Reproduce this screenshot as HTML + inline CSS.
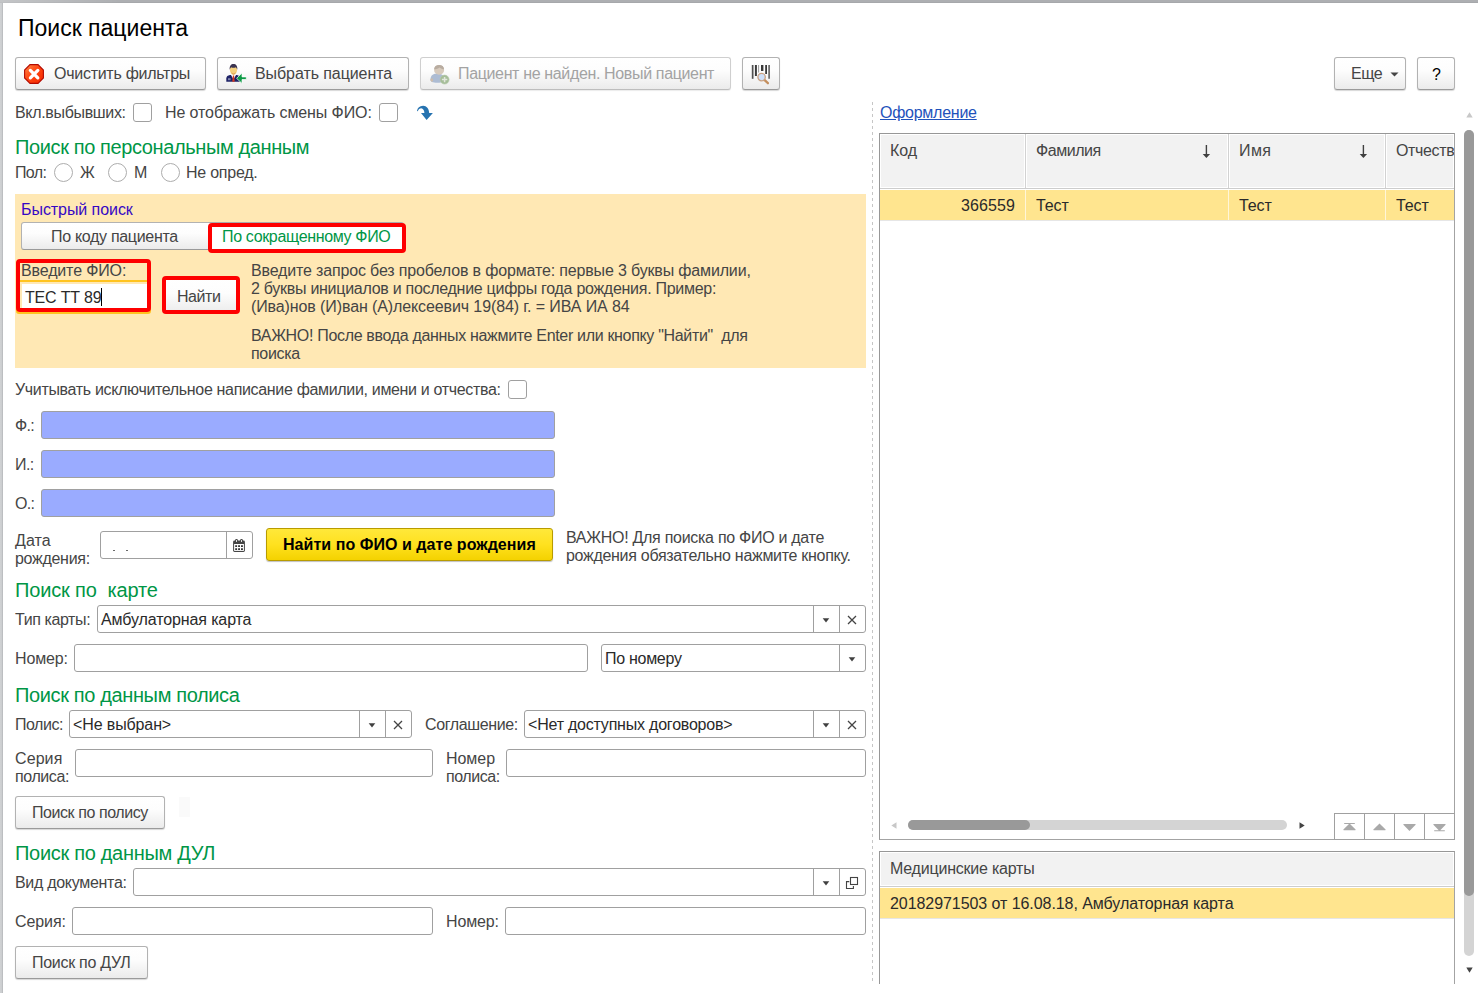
<!DOCTYPE html>
<html lang="ru">
<head>
<meta charset="utf-8">
<title>Поиск пациента</title>
<style>
html,body{margin:0;padding:0;overflow:hidden;}
body{width:1478px;height:993px;overflow:hidden;background:#fff;position:relative;
 font-family:"Liberation Sans",sans-serif;font-size:16px;color:#454545;}
*{box-sizing:border-box;}
.a{position:absolute;white-space:nowrap;}
.t{position:absolute;white-space:nowrap;line-height:18px;height:18px;}
.frameT{left:0;top:0;width:1478px;height:3px;background:linear-gradient(to right,rgba(255,255,255,.28),rgba(255,255,255,0) 120px),linear-gradient(#adafb2 0,#adafb2 66%,#a6a8ab 66%);}
.frameL{left:0;top:3px;width:3px;height:990px;background:linear-gradient(to right,#d0d2d4,#cbcdcf 60%,#b2b4b7);}
.title{left:18px;top:13px;font-size:23px;line-height:28px;color:#000;}
.btn{position:absolute;height:33px;border:1px solid #b2b2b2;border-bottom-color:#9a9a9a;border-radius:3px;
 background:linear-gradient(#ffffff 0%,#fdfdfd 40%,#ebebeb 100%);
 box-shadow:0 1px 1px rgba(0,0,0,.16);}
.btn.dis{border-color:#cfcfcf;border-bottom-color:#bdbdbd;box-shadow:0 1px 1px rgba(0,0,0,.08);}
.h{position:absolute;white-space:nowrap;font-size:20px;line-height:24px;color:#009646;}
.cb{position:absolute;width:19px;height:19px;border:1px solid #a0a0a0;border-radius:3px;background:#fff;}
.rb{position:absolute;width:19px;height:19px;border:1px solid #adadad;border-radius:50%;background:#fff;}
.inp{position:absolute;height:28px;border:1px solid #a0a0a0;border-radius:3px;background:#fff;
 line-height:26px;color:#222;white-space:nowrap;overflow:hidden;}
.inp.blue{background:#9aabff;}
.sep{position:absolute;top:0;width:1px;height:26px;background:#a0a0a0;}
.red{position:absolute;border:4px solid #fe0000;border-radius:4px;}
svg{display:block;overflow:visible;}
</style>
</head>
<body>
<div class="a frameT"></div>
<div class="a frameL"></div>

<!-- toolbar -->
<div class="btn" style="left:15px;top:57px;width:191px;"></div>
<div class="btn" style="left:217px;top:57px;width:192px;"></div>
<div class="btn dis" style="left:420px;top:57px;width:311px;"></div>
<div class="btn" style="left:742px;top:57px;width:38px;"></div>
<div class="btn" style="left:1334px;top:57px;width:72px;"></div>
<div class="btn" style="left:1417px;top:57px;width:38px;"></div>

<!-- icon: clear filters (red octagon with white X) -->
<svg class="a" style="left:24px;top:64px;" width="20" height="20" viewBox="0 0 20 20">
 <defs><linearGradient id="rg" x1="0" y1="0" x2="1" y2="1"><stop offset="0" stop-color="#ff8a4a"/><stop offset=".45" stop-color="#ff4612"/><stop offset="1" stop-color="#f52800"/></linearGradient></defs>
 <path d="M6 .6h8L19.400 6v8L14 19.400H6L.6 14V6z" fill="url(#rg)" stroke="#b30a00" stroke-width="1.100"/>
 <path d="M6.400 6.400l7.400 7.400M13.800 6.400l-7.400 7.400" stroke="#fff" stroke-width="3.300" stroke-linecap="round"/>
</svg>
<!-- icon: choose patient -->
<svg class="a" style="left:226px;top:63px;" width="21" height="21" viewBox="0 0 21 21">
 <path d="M.3 18.800v-3.200c0-2.300 1.500-3.400 3.700-3.700h6.800c2.100.3 3.200 1.400 3.200 3.700v3.200z" fill="#1e2266"/>
 <path d="M2 15.200h2.600v2H2z" fill="#7d84ad"/>
 <path d="M5 11.900h5l-2.500 4.600z" fill="#fff"/>
 <path d="M6.900 12.600h1.200l.6 6.200H6.300z" fill="#d9381e"/>
 <ellipse cx="7.500" cy="6.900" rx="3.600" ry="4.800" fill="#f6d27e"/>
 <path d="M5.300 8.500c1 2.600 3.400 2.600 4.400 0-.3 2.200-1.100 3.300-2.200 3.300s-1.900-1.100-2.200-3.300z" fill="#dfa254"/>
 <path d="M3.700 6.800C3.300 2.800 5 .9 7.500.9s4.200 1.900 3.800 5.900c-.4-1.400-.9-2.100-1.500-2.600-1 .8-3.600.8-4.600 0-.6.500-1.100 1.200-1.500 2.600z" fill="#3b3350"/>
 <path d="M10.600 15.300l5.400-5.200v3.800h4.300v2.600H16v3.900z" fill="#0d9a45" stroke="#fff" stroke-width=".7" stroke-linejoin="round"/>
</svg>
<!-- icon: new patient (disabled) -->
<svg class="a" style="left:430px;top:64px;" width="20" height="21" viewBox="0 0 20 21">
 <path d="M.4 15.500c.3-3.500 1.800-5.300 4.500-5.800h5c2.800.5 4.300 2.300 4.500 5.800.1 2-1.500 3.300-7 3.300-5 0-7.100-1.300-7-3.300z" fill="#adbcd3"/>
 <path d="M.5 15c.5-1 2-.9 2.400 0 .5 1.200.2 2.400-.8 2.800C.9 17.500.1 16.200.5 15z" fill="#cdbcab"/>
 <ellipse cx="9.100" cy="5.900" rx="5" ry="4.900" fill="#d7cabc"/>
 <path d="M4.100 5.300C4.100 2.400 6.300 1 9.100 1s5 1.400 5 4.300c-1.700-.2-3.200-.8-4.500-1.900-1.300 1.100-3.300 1.700-5.500 1.900z" fill="#b8aca0"/>
 <circle cx="14.600" cy="15.600" r="4.500" fill="#a5bd98" stroke="#b7caac" stroke-width=".6"/>
 <path d="M14.600 12.900v5.400M11.900 15.600h5.400" stroke="#e1e6dc" stroke-width="1.500"/>
</svg>
<!-- icon: barcode search -->
<svg class="a" style="left:751px;top:65px;" width="20" height="19" viewBox="0 0 20 19">
 <path d="M.8 0h1.700v13.800H.8z" fill="#505050"/>
 <path d="M3.900 0h2v11H3.900z" fill="#3a3a3a"/>
 <path d="M7.200 0h.9v7.500h-.9z" fill="#8f8f8f"/>
 <path d="M10 0h2.400v6H10z" fill="#3a3a3a"/>
 <path d="M14.200 0h1.800v9h-1.800z" fill="#3a3a3a"/>
 <path d="M17.300 0h1.600v13.800h-1.600z" fill="#606060"/>
 <path d="M13.400 14.900l3.500 3.300" stroke="#c48f5e" stroke-width="2.300" stroke-linecap="round"/>
 <circle cx="10.600" cy="12.100" r="3.700" fill="#cfe0f9" stroke="#c9a283" stroke-width="1.300"/>
</svg>
<!-- more arrow -->
<svg class="a" style="left:1390px;top:72px;" width="9" height="5" viewBox="0 0 9 5"><path d="M.5.500h8L4.500 4.500z" fill="#444"/></svg>

<!-- row 1 -->
<div class="cb" style="left:133px;top:103px;"></div>
<div class="cb" style="left:379px;top:103px;"></div>
<svg class="a" style="left:416px;top:105px;" width="18" height="16" viewBox="0 0 18 16">
 <path d="M1 6C1.500 3 3.500 1.100 7.100.85 10.500.8 13 4 13.200 7.900L16.900 8l-6.300 7.100L5 8.100l3.400-.2C8.300 5.500 7 3.300 5.300 3.300 3.500 3.300 2.500 4.500 1.800 6.200z" fill="#2673b0"/>
</svg>

<div class="rb" style="left:54px;top:163px;"></div>
<div class="rb" style="left:108px;top:163px;"></div>
<div class="rb" style="left:161px;top:163px;"></div>

<!-- quick search panel -->
<div class="a" style="left:15px;top:194px;width:851px;height:174px;background:#ffe8b4;"></div>
<div class="btn" style="left:21px;top:222px;width:190px;height:28px;border-radius:3px 0 0 3px;box-shadow:none;"></div>
<div class="a" style="left:210px;top:222px;width:194px;height:28px;background:#fff;border-top:1px solid #ababab;border-radius:0 3px 0 0;"></div>
<div class="red" style="left:208px;top:223px;width:198px;height:30px;"></div>

<div class="a" style="left:16px;top:280px;width:135px;height:34px;border:2px solid #ffc31f;border-radius:3px;background:#ffe8b4;"></div>
<div class="a" style="left:22px;top:284px;width:126px;height:27px;background:#fff;"></div>
<div class="a" style="left:101px;top:288px;width:1px;height:18px;background:#000;"></div>
<div class="red" style="left:16px;top:259px;width:135px;height:53px;"></div>

<div class="a" style="left:164px;top:278px;width:74px;height:34px;background:linear-gradient(#fff 0%,#fdfdfd 45%,#ececec 100%);"></div>
<div class="red" style="left:162px;top:276px;width:78px;height:38px;"></div>

<!-- exceptional spelling -->
<div class="cb" style="left:508px;top:380px;"></div>
<div class="inp blue" style="left:41px;top:411px;width:514px;"></div>
<div class="inp blue" style="left:41px;top:450px;width:514px;"></div>
<div class="inp blue" style="left:41px;top:489px;width:514px;"></div>

<!-- birth date -->
<div class="inp" style="left:100px;top:531px;width:153px;"><div class="sep" style="left:125px;"></div></div>
<div class="a" style="left:113px;top:550px;width:2px;height:1px;background:#6a6a6a;"></div>
<div class="a" style="left:126px;top:550px;width:2px;height:1px;background:#6a6a6a;"></div>
<svg class="a" style="left:233px;top:539px;" width="12" height="13" viewBox="0 0 12 13">
 <rect x=".1" y="1.500" width="11.800" height="11.400" rx="1.400" fill="#454545"/>
 <rect x="2.100" y="0" width="2.800" height="3.600" rx="1.300" fill="#454545"/>
 <rect x="7.100" y="0" width="2.800" height="3.600" rx="1.300" fill="#454545"/>
 <ellipse cx="3.500" cy="2.100" rx=".55" ry="1" fill="#fff"/>
 <ellipse cx="8.500" cy="2.100" rx=".55" ry="1" fill="#fff"/>
 <rect x="1.100" y="5" width="9.800" height="6.900" fill="#fff"/>
 <path d="M2.200 6.200h1.900v1.900H2.200zM5.100 6.200H7v1.900H5.100zM8 6.200h1.900v1.900H8zM2.200 9.200h1.900v1.900H2.200zM5.100 9.200H7v1.900H5.100zM8 9.200h1.900v1.900H8z" fill="#333"/>
</svg>
<div class="a" style="left:266px;top:528px;width:287px;height:33px;border:1px solid #b89b00;border-radius:3px;background:linear-gradient(#ffe83a 0%,#ffe11f 50%,#f4d200 100%);box-shadow:0 1px 1px rgba(0,0,0,.25);"></div>

<!-- card search -->
<div class="inp" style="left:97px;top:605px;width:769px;"><div class="sep" style="left:715px;"></div><div class="sep" style="left:741px;"></div></div>
<div class="inp" style="left:74px;top:644px;width:514px;"></div>
<div class="inp" style="left:601px;top:644px;width:265px;"><div class="sep" style="left:237px;"></div></div>

<!-- policy search -->
<div class="inp" style="left:69px;top:710px;width:343px;"><div class="sep" style="left:289px;"></div><div class="sep" style="left:315px;"></div></div>
<div class="inp" style="left:524px;top:710px;width:342px;"><div class="sep" style="left:288px;"></div><div class="sep" style="left:314px;"></div></div>
<div class="inp" style="left:75px;top:749px;width:358px;"></div>
<div class="inp" style="left:506px;top:749px;width:360px;"></div>
<div class="btn" style="left:15px;top:796px;width:150px;"></div>
<div class="a" style="left:179px;top:797px;width:11px;height:20px;background:#fafafa;"></div>

<!-- DUL search -->
<div class="inp" style="left:133px;top:868px;width:733px;"><div class="sep" style="left:679px;"></div><div class="sep" style="left:705px;"></div></div>
<div class="inp" style="left:72px;top:907px;width:361px;"></div>
<div class="inp" style="left:505px;top:907px;width:361px;"></div>
<div class="btn" style="left:15px;top:946px;width:133px;"></div>

<!-- dropdown triangles / clear X / open icons -->
<svg class="a tri" style="left:822px;top:618px;" width="8" height="5" viewBox="0 0 8 5"><path d="M.7.200h6.600L4 4.400z" fill="#404040"/></svg>
<svg class="a tri" style="left:848px;top:657px;" width="8" height="5" viewBox="0 0 8 5"><path d="M.7.200h6.600L4 4.400z" fill="#404040"/></svg>
<svg class="a tri" style="left:368px;top:723px;" width="8" height="5" viewBox="0 0 8 5"><path d="M.7.200h6.600L4 4.400z" fill="#404040"/></svg>
<svg class="a tri" style="left:822px;top:723px;" width="8" height="5" viewBox="0 0 8 5"><path d="M.7.200h6.600L4 4.400z" fill="#404040"/></svg>
<svg class="a tri" style="left:822px;top:881px;" width="8" height="5" viewBox="0 0 8 5"><path d="M.7.200h6.600L4 4.400z" fill="#404040"/></svg>
<svg class="a" style="left:847px;top:615px;" width="10" height="10" viewBox="0 0 10 10"><path d="M1 1l8 8M9 1l-8 8" stroke="#444" stroke-width="1.300"/></svg>
<svg class="a" style="left:393px;top:720px;" width="10" height="10" viewBox="0 0 10 10"><path d="M1 1l8 8M9 1l-8 8" stroke="#444" stroke-width="1.300"/></svg>
<svg class="a" style="left:847px;top:720px;" width="10" height="10" viewBox="0 0 10 10"><path d="M1 1l8 8M9 1l-8 8" stroke="#444" stroke-width="1.300"/></svg>
<svg class="a" style="left:846px;top:877px;" width="13" height="13" viewBox="0 0 13 13"><path d="M3.300 4.600H.5v6.900h6.900V9" fill="none" stroke="#444" stroke-width="1.100"/><rect x="4.500" y=".5" width="7" height="7" fill="#fff" stroke="#444" stroke-width="1.100"/></svg>

<!-- splitter -->
<div class="a" style="left:872px;top:102px;width:1px;height:882px;background:repeating-linear-gradient(to bottom,#c6c6c6 0,#c6c6c6 2.600px,transparent 2.600px,transparent 6px);"></div>

<!-- right panel: table 1 -->
<div class="a" style="left:879px;top:133px;width:576px;height:707px;border:1px solid #a3a3a3;border-top-color:#979797;border-left-color:#979797;background:#fff;"></div>
<div class="a" style="left:881px;top:135px;width:572px;height:52px;background:#f2f2f2;"></div>
<div class="a" style="left:880px;top:188px;width:574px;height:1px;background:#cdcdcd;"></div>
<div class="a" style="left:1024px;top:134px;width:3px;height:54px;background:#fff;"></div>
<div class="a" style="left:1025px;top:134px;width:1px;height:54px;background:#d2d2d2;"></div>
<div class="a" style="left:1227px;top:134px;width:3px;height:54px;background:#fff;"></div>
<div class="a" style="left:1228px;top:134px;width:1px;height:54px;background:#d2d2d2;"></div>
<div class="a" style="left:1384px;top:134px;width:3px;height:54px;background:#fff;"></div>
<div class="a" style="left:1385px;top:134px;width:1px;height:54px;background:#d2d2d2;"></div>
<div class="a" style="left:1396px;top:142px;width:58px;height:18px;overflow:hidden;"><span class="t" style="left:0;top:0;letter-spacing:-.35px;">Отчество</span></div>
<svg class="a" style="left:1202px;top:145px;" width="9" height="13" viewBox="0 0 9 13"><path d="M3.700 0h1.400v9.500H3.700zM.7 9h7.400l-3.700 4.100z" fill="#404040"/></svg>
<svg class="a" style="left:1359px;top:145px;" width="9" height="13" viewBox="0 0 9 13"><path d="M3.700 0h1.400v9.500H3.700zM.7 9h7.400l-3.700 4.100z" fill="#404040"/></svg>
<!-- selected row -->
<div class="a" style="left:880px;top:190px;width:574px;height:30px;background:#ffe58f;"></div>
<div class="a" style="left:1025px;top:190px;width:1px;height:30px;background:#fff6d9;"></div>
<div class="a" style="left:1228px;top:190px;width:1px;height:30px;background:#fff6d9;"></div>
<div class="a" style="left:1385px;top:190px;width:1px;height:30px;background:#fff6d9;"></div>
<div class="a" style="left:880px;top:220px;width:574px;height:1px;background:#e6e6e6;"></div>

<!-- h scrollbar -->
<div class="a" style="left:908px;top:820px;width:379px;height:10px;border-radius:5px;background:#d4d4d4;"></div>
<div class="a" style="left:908px;top:820px;width:122px;height:10px;border-radius:5px;background:#999;"></div>
<svg class="a" style="left:891px;top:822px;" width="6" height="7" viewBox="0 0 6 7"><path d="M5.500.300v6.400L.3 3.500z" fill="#c8c8c8"/></svg>
<svg class="a" style="left:1299px;top:822px;" width="6" height="7" viewBox="0 0 6 7"><path d="M.5.300v6.400L5.700 3.500z" fill="#444"/></svg>
<!-- nav buttons -->
<div class="a" style="left:1334px;top:813px;width:121px;height:27px;border:1px solid #a0a0a0;background:#fff;"></div>
<div class="a" style="left:1364px;top:814px;width:1px;height:25px;background:#a0a0a0;"></div>
<div class="a" style="left:1394px;top:814px;width:1px;height:25px;background:#a0a0a0;"></div>
<div class="a" style="left:1424px;top:814px;width:1px;height:25px;background:#a0a0a0;"></div>
<svg class="a" style="left:1343px;top:823px;" width="13" height="8" viewBox="0 0 13 8"><path d="M1.200 0h10.600v1H1.200zM6.500.5l6.100 6.100q.3.700-.4.700H.8q-.7 0-.4-.7z" fill="#a9a9a9"/></svg>
<svg class="a" style="left:1373px;top:823px;" width="13" height="8" viewBox="0 0 13 8"><path d="M6.500.5l6.100 6.100q.3.700-.4.700H.8q-.7 0-.4-.7z" fill="#a9a9a9"/></svg>
<svg class="a" style="left:1403px;top:824px;" width="13" height="8" viewBox="0 0 13 8"><path d="M6.500 6.900L.4.800Q.1.100.8.100h11.400q.7 0 .4.700z" fill="#a9a9a9"/></svg>
<svg class="a" style="left:1433px;top:824px;" width="13" height="8" viewBox="0 0 13 8"><path d="M6.500 6.900L.4.800Q.1.100.8.100h11.400q.7 0 .4.700zM1.200 6.300h10.600v1H1.200z" fill="#a9a9a9"/></svg>

<!-- medical cards table -->
<div class="a" style="left:879px;top:851px;width:576px;height:133px;border:1px solid #a3a3a3;border-top-color:#979797;border-left-color:#979797;border-bottom:none;background:#fff;"></div>
<div class="a" style="left:881px;top:853px;width:572px;height:32px;background:#f2f2f2;"></div>
<div class="a" style="left:880px;top:886px;width:574px;height:1px;background:#cdcdcd;"></div>
<div class="a" style="left:880px;top:888px;width:574px;height:30px;background:#ffe58f;"></div>
<div class="a" style="left:880px;top:918px;width:574px;height:1px;background:#e6e6e6;"></div>

<!-- v scrollbar -->
<div class="a" style="left:1464px;top:130px;width:10px;height:826px;border-radius:5px;background:#d4d4d4;"></div>
<div class="a" style="left:1464px;top:130px;width:10px;height:766px;border-radius:5px;background:#999;"></div>
<svg class="a" style="left:1466px;top:112px;" width="7" height="6" viewBox="0 0 7 6"><path d="M.3 5.500h6.400L3.500.3z" fill="#c8c8c8"/></svg>
<svg class="a" style="left:1466px;top:967px;" width="7" height="6" viewBox="0 0 7 6"><path d="M.3.500h6.400L3.500 5.700z" fill="#444"/></svg>

<!-- texts -->
<div class="a title" style="left:18px;top:14px;">Поиск пациента</div>
<div class="t" style="left:54px;top:65px;letter-spacing:-0.271px;">Очистить фильтры</div>
<div class="t" style="left:255px;top:65px;letter-spacing:-0.078px;">Выбрать пациента</div>
<div class="t" style="left:458px;top:65px;color:#a3a3a3;letter-spacing:-0.353px;">Пациент не найден. Новый пациент</div>
<div class="t" style="left:1351px;top:65px;letter-spacing:-0.421px;">Еще</div>
<div class="t" style="left:1432px;top:66px;color:#000;">?</div>
<div class="t" style="left:15px;top:104px;letter-spacing:-0.332px;">Вкл.выбывших:</div>
<div class="t" style="left:165px;top:104px;letter-spacing:-0.094px;">Не отображать смены ФИО:</div>
<div class="h" style="left:15px;top:135px;letter-spacing:-0.382px;">Поиск по персональным данным</div>
<div class="t" style="left:15px;top:164px;letter-spacing:-0.632px;">Пол:</div>
<div class="t" style="left:80px;top:164px;">Ж</div>
<div class="t" style="left:134px;top:164px;">М</div>
<div class="t" style="left:186px;top:164px;letter-spacing:-0.243px;">Не опред.</div>
<div class="t" style="left:21px;top:201px;color:#3608c4;letter-spacing:-0.062px;">Быстрый поиск</div>
<div class="t" style="left:51px;top:228px;letter-spacing:-0.306px;">По коду пациента</div>
<div class="t" style="left:222px;top:228px;color:#009646;letter-spacing:-0.342px;">По сокращенному ФИО</div>
<div class="t" style="left:21px;top:262px;letter-spacing:-0.138px;">Введите ФИО:</div>
<div class="t" style="left:25px;top:289px;color:#2a2a2a;letter-spacing:-0.204px;">ТЕС ТТ 89</div>
<div class="t" style="left:177px;top:288px;letter-spacing:-0.431px;">Найти</div>
<div class="t" style="left:251px;top:262px;letter-spacing:-0.156px;">Введите запрос без пробелов в формате: первые 3 буквы фамилии,</div>
<div class="t" style="left:251px;top:280px;letter-spacing:-0.278px;">2 буквы инициалов и последние цифры года рождения. Пример:</div>
<div class="t" style="left:251px;top:298px;letter-spacing:-0.108px;">(Ива)нов (И)ван (А)лексеевич 19(84) г. = ИВА ИА 84</div>
<div class="t" style="left:251px;top:327px;letter-spacing:-0.324px;">ВАЖНО! После ввода данных нажмите Enter или кнопку "Найти"&nbsp; для</div>
<div class="t" style="left:251px;top:345px;letter-spacing:-0.308px;">поиска</div>
<div class="t" style="left:15px;top:381px;letter-spacing:-0.331px;">Учитывать исключительное написание фамилии, имени и отчества:</div>
<div class="t" style="left:15px;top:417px;letter-spacing:-0.654px;">Ф.:</div>
<div class="t" style="left:15px;top:456px;letter-spacing:-0.597px;">И.:</div>
<div class="t" style="left:15px;top:495px;letter-spacing:-0.748px;">О.:</div>
<div class="t" style="left:15px;top:532px;letter-spacing:0.091px;">Дата</div>
<div class="t" style="left:15px;top:550px;letter-spacing:-0.293px;">рождения:</div>
<div class="t" style="left:283px;top:536px;color:#000;font-weight:bold;letter-spacing:0.049px;">Найти по ФИО и дате рождения</div>
<div class="t" style="left:566px;top:529px;letter-spacing:-0.282px;">ВАЖНО! Для поиска по ФИО и дате</div>
<div class="t" style="left:566px;top:547px;letter-spacing:-0.296px;">рождения обязательно нажмите кнопку.</div>
<div class="h" style="left:15px;top:578px;letter-spacing:-0.154px;">Поиск по&nbsp; карте</div>
<div class="t" style="left:15px;top:611px;letter-spacing:-0.399px;">Тип карты:</div>
<div class="t" style="left:101px;top:611px;color:#2a2a2a;letter-spacing:-0.115px;">Амбулаторная карта</div>
<div class="t" style="left:15px;top:650px;letter-spacing:-0.134px;">Номер:</div>
<div class="t" style="left:605px;top:650px;color:#2a2a2a;letter-spacing:-0.289px;">По номеру</div>
<div class="h" style="left:15px;top:683px;letter-spacing:-0.365px;">Поиск по данным полиса</div>
<div class="t" style="left:15px;top:716px;letter-spacing:-0.461px;">Полис:</div>
<div class="t" style="left:73px;top:716px;color:#2a2a2a;letter-spacing:-0.117px;">&lt;Не выбран&gt;</div>
<div class="t" style="left:425px;top:716px;letter-spacing:-0.376px;">Соглашение:</div>
<div class="t" style="left:528px;top:716px;color:#2a2a2a;letter-spacing:-0.212px;">&lt;Нет доступных договоров&gt;</div>
<div class="t" style="left:15px;top:750px;letter-spacing:0.089px;">Серия</div>
<div class="t" style="left:15px;top:768px;letter-spacing:-0.404px;">полиса:</div>
<div class="t" style="left:446px;top:750px;letter-spacing:-0.050px;">Номер</div>
<div class="t" style="left:446px;top:768px;letter-spacing:-0.447px;">полиса:</div>
<div class="t" style="left:32px;top:804px;letter-spacing:-0.432px;">Поиск по полису</div>
<div class="h" style="left:15px;top:841px;letter-spacing:-0.305px;">Поиск по данным ДУЛ</div>
<div class="t" style="left:15px;top:874px;letter-spacing:-0.297px;">Вид документа:</div>
<div class="t" style="left:15px;top:913px;letter-spacing:-0.084px;">Серия:</div>
<div class="t" style="left:446px;top:913px;letter-spacing:-0.134px;">Номер:</div>
<div class="t" style="left:32px;top:954px;letter-spacing:-0.286px;">Поиск по ДУЛ</div>
<div class="t" style="left:880px;top:104px;color:#1f52bb;text-decoration:underline;letter-spacing:-0.261px;">Оформление</div>
<div class="t" style="left:890px;top:142px;letter-spacing:-0.068px;">Код</div>
<div class="t" style="left:1036px;top:142px;letter-spacing:-0.463px;">Фамилия</div>
<div class="t" style="left:1239px;top:142px;letter-spacing:0.409px;">Имя</div>
<div class="t" style="left:961px;top:197px;color:#2a2a2a;letter-spacing:0.118px;">366559</div>
<div class="t" style="left:1036px;top:197px;color:#2a2a2a;letter-spacing:-0.077px;">Тест</div>
<div class="t" style="left:1239px;top:197px;color:#2a2a2a;letter-spacing:-0.077px;">Тест</div>
<div class="t" style="left:1396px;top:197px;color:#2a2a2a;letter-spacing:-0.102px;">Тест</div>
<div class="t" style="left:890px;top:860px;letter-spacing:-0.216px;">Медицинские карты</div>
<div class="t" style="left:890px;top:895px;color:#2a2a2a;letter-spacing:-0.065px;">20182971503 от 16.08.18, Амбулаторная карта</div>
</body>
</html>
